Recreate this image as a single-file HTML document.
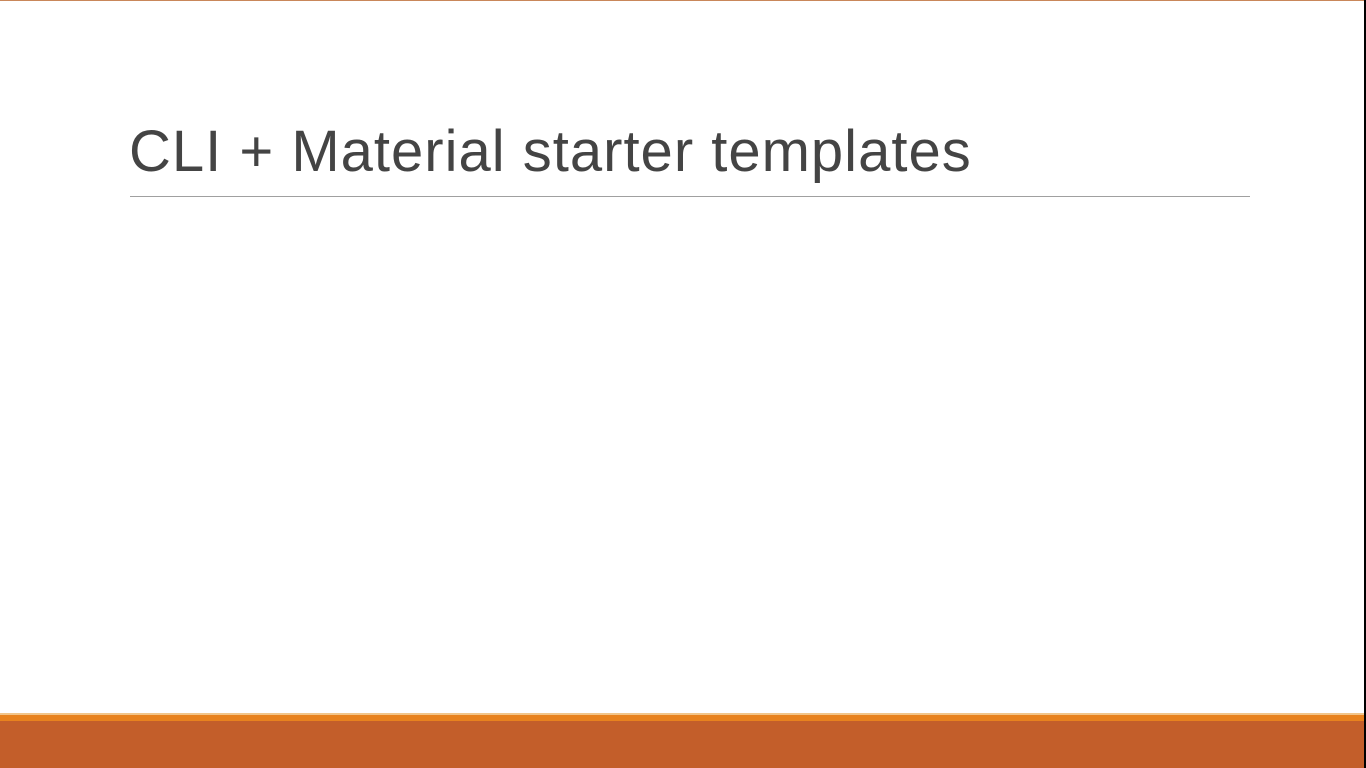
<!DOCTYPE html>
<html><head><style>
html,body{margin:0;padding:0;width:1366px;height:768px;overflow:hidden;background:#fff;position:relative;font-family:"Liberation Sans",sans-serif}
.top{position:absolute;left:0;top:0;width:1366px;height:1px;background:#c9875a}
.right{position:absolute;left:1364px;top:0;width:2px;height:768px;background:#000}
.title{position:absolute;left:129px;top:114px;font-size:58px;color:#444;white-space:nowrap;letter-spacing:1px;line-height:76px}
.rule{position:absolute;left:130px;top:196px;width:1120px;height:1px;background:#a0a0a0}
.o1{position:absolute;left:0;top:713px;width:1366px;height:2px;background:#f2c58a}
.o2{position:absolute;left:0;top:715px;width:1366px;height:6px;background:#e8821e}
.o3{position:absolute;left:0;top:721px;width:1366px;height:47px;background:#c35e2a}
</style></head><body>
<div class="top"></div>
<div class="title">CLI + Material starter templates</div>
<div class="rule"></div>
<div class="o1"></div><div class="o2"></div><div class="o3"></div>
<div class="right"></div>
</body></html>
